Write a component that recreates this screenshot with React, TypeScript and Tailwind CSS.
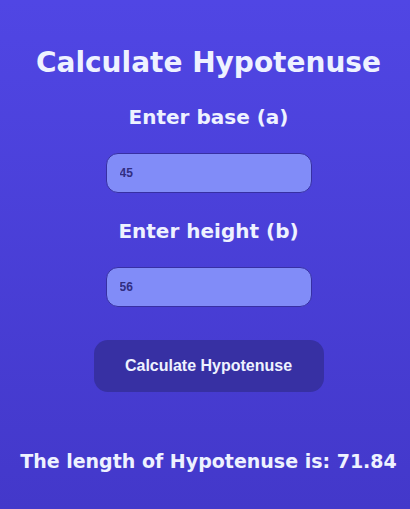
const App = () => {
  return (
    <div className="w-full min-h-[509px] pl-[7px] bg-gradient-to-b from-[#5046e4] to-[#4338ca] flex flex-col items-center text-[#eef2ff] font-['DejaVu_Sans',sans-serif]">
      <h1 className="mt-[45px] text-[28px] leading-[36px] font-bold">
        Calculate Hypotenuse
      </h1>

      <label className="mt-[22px] text-[20px] leading-[28px] font-bold">
        Enter base (a)
      </label>
      <input
        type="text"
        defaultValue="45"
        className="mt-[22px] w-[206px] h-[40px] px-[13px] rounded-[12px] bg-[#818cf8] border border-[#3730a3] text-[12px] font-bold text-[#312e81] font-['Liberation_Sans',sans-serif] outline-none"
      />

      <label className="mt-[24px] text-[20px] leading-[28px] font-bold">
        Enter height (b)
      </label>
      <input
        type="text"
        defaultValue="56"
        className="mt-[22px] w-[206px] h-[40px] px-[13px] rounded-[12px] bg-[#818cf8] border border-[#3730a3] text-[12px] font-bold text-[#312e81] font-['Liberation_Sans',sans-serif] outline-none"
      />

      <button
        type="button"
        className="mt-[33px] w-[230px] h-[52px] rounded-[14px] bg-[#3730a3] text-[16px] font-bold text-[#eef2ff] font-['Liberation_Sans',sans-serif]"
      >
        Calculate Hypotenuse
      </button>

      <p className="mt-[55px] text-[19px] leading-[28px] font-bold">
        The length of Hypotenuse is: 71.84
      </p>
    </div>
  );
};

export default App;
